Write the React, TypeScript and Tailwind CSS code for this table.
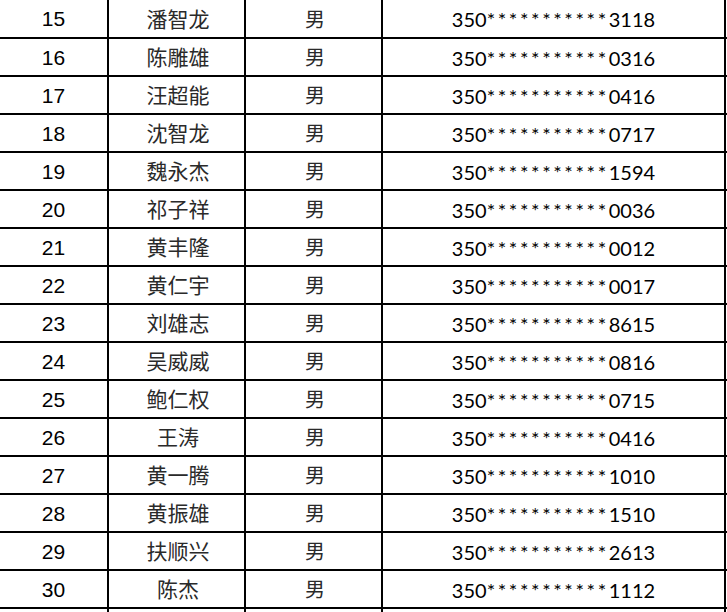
const rows: [number, string, string][] = [
  [15, "潘智龙", "3118"],
  [16, "陈雕雄", "0316"],
  [17, "汪超能", "0416"],
  [18, "沈智龙", "0717"],
  [19, "魏永杰", "1594"],
  [20, "祁子祥", "0036"],
  [21, "黄丰隆", "0012"],
  [22, "黄仁宇", "0017"],
  [23, "刘雄志", "8615"],
  [24, "吴威威", "0816"],
  [25, "鲍仁权", "0715"],
  [26, "王涛", "0416"],
  [27, "黄一腾", "1010"],
  [28, "黄振雄", "1510"],
  [29, "扶顺兴", "2613"],
  [30, "陈杰", "1112"],
];

const cjk = "font-['Noto_Sans_CJK_SC',sans-serif]";

export default function App() {
  return (
    <div className="w-[727px] h-[612px] overflow-hidden bg-white text-black">
      {rows.map(([no, name, tail], i) => (
        <div
          key={no}
          className={`flex border-b-2 border-black ${i === 0 ? "h-[39px]" : "h-[38px]"}`}
        >
          <div className="w-[109px] shrink-0 border-r-2 border-black flex items-center justify-center font-['Liberation_Sans',Arial,sans-serif] text-[21px] pt-px">
            {no}
          </div>
          <div className={`w-[137px] shrink-0 border-r-2 border-black flex items-center justify-center ${cjk} text-[21px] text-[#2a2a2a] pl-[3px]`}>
            {name}
          </div>
          <div className={`w-[137px] shrink-0 border-r-2 border-black flex items-center justify-center ${cjk} text-[20px] text-[#2a2a2a] pl-[3px]`}>
            男
          </div>
          <div className="w-[343px] shrink-0 border-r-2 border-black flex items-center justify-center font-['Lato',sans-serif] text-[20px] pt-px">
            350<span className="tracking-[2.6px]">***********</span>{tail}
          </div>
        </div>
      ))}
      <div className="flex h-[38px]">
        <div className="w-[109px] shrink-0 border-r-2 border-black" />
        <div className="w-[137px] shrink-0 border-r-2 border-black" />
        <div className="w-[137px] shrink-0 border-r-2 border-black" />
        <div className="w-[343px] shrink-0 border-r-2 border-black" />
      </div>
    </div>
  );
}
